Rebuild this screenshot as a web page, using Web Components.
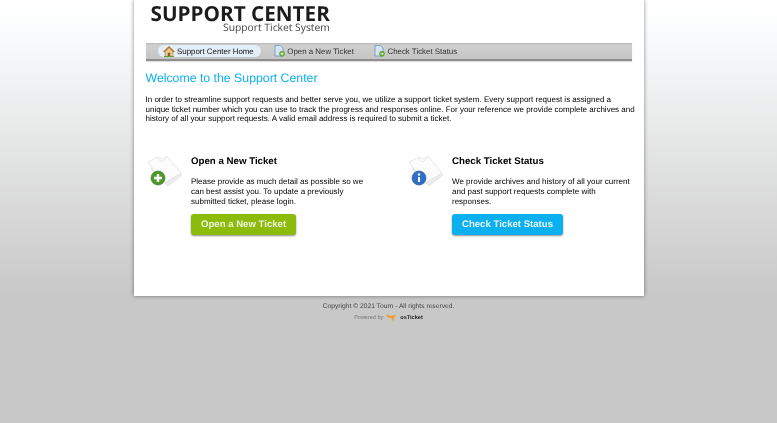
<!DOCTYPE html>
<html>
<head>
<meta charset="utf-8">
<title>Support Center</title>
<style>
html, body { margin: 0; height: 100%; }
body {
  background: #c8c8c8 linear-gradient(#ffffff 0, #fbfcfd 30px, #c8c8c8 296px) no-repeat;
  font-family: "Liberation Sans", Arial, sans-serif;
  color: #000;
  text-rendering: geometricPrecision;
}
</style>
</head>
<body>
<support-page>
  <support-header slot="header"></support-header>
  <support-nav slot="nav">
    <support-nav-item icon="home" active>Support Center Home</support-nav-item>
    <support-nav-item icon="new">Open a New Ticket</support-nav-item>
    <support-nav-item icon="status">Check Ticket Status</support-nav-item>
  </support-nav>
  <support-welcome>
    In order to streamline support requests and better serve you, we utilize a support ticket system. Every support request is assigned a unique ticket number which you can use to track the progress and responses online. For your reference we provide complete archives and history of all your support requests. A valid email address is required to submit a ticket.
  </support-welcome>
  <support-actions>
    <support-action kind="new" title="Open a New Ticket" button="Open a New Ticket">
      Please provide as much detail as possible so we can best assist you. To update a previously submitted ticket, please login.
    </support-action>
    <support-action kind="status" title="Check Ticket Status" button="Check Ticket Status">
      We provide archives and history of all your current and past support requests complete with responses.
    </support-action>
  </support-actions>
  <support-footer slot="footer"></support-footer>
</support-page>

<script>
function makeTemplate (html) {
  const t = document.createElement('template');
  t.innerHTML = html;
  return t;
}

class SupportPage extends HTMLElement {
  constructor() {
    super();
    this.attachShadow({ mode: 'open' });
    this.shadowRoot.append(SupportPage.TEMPLATE.content.cloneNode(true));
  }
}
SupportPage.TEMPLATE = makeTemplate(`
<style>
:host { display: block; width: 510px; margin: 0 auto; filter: blur(.3px); }
.sheet {
  background: #fff;
  height: 296px;
  box-sizing: border-box;
  padding: 0 12px;
  box-shadow: 0 0 4px rgba(0,0,0,.45);
  display: flow-root;
}
</style>
<div class="sheet">
  <slot name="header"></slot>
  <slot name="nav"></slot>
  <slot></slot>
</div>
<slot name="footer"></slot>
`);

class SupportHeader extends HTMLElement {
  constructor() {
    super();
    this.attachShadow({ mode: 'open' });
    this.shadowRoot.append(SupportHeader.TEMPLATE.content.cloneNode(true));
  }
}
SupportHeader.TEMPLATE = makeTemplate(`
<style>
:host { display: block; height: 43px; box-sizing: border-box; padding: 3.500px 0 0 5px; font-family: "Open Sans", sans-serif; color: #1c1c1c; }
.logo { display: inline-flex; flex-direction: column; align-items: flex-end; }
.name { font-size: 20.700px; font-weight: 700; line-height: 18px; }
.tag { font-size: 10.300px; line-height: 9px; margin-top: 1.500px; color: #444; }
</style>
<div class="logo">
  <div class="name">SUPPORT CENTER</div>
  <div class="tag">Support Ticket System</div>
</div>
`);

class SupportNav extends HTMLElement {
  constructor() {
    super();
    this.attachShadow({ mode: 'open' });
    this.shadowRoot.innerHTML = `
<style>
:host {
  display: flex;
  align-items: center;
  gap: 8px;
  height: 17.500px;
  box-sizing: border-box;
  padding: 1px 0 0 12px;
  background: linear-gradient(#b9b9b9, #d0d0d0 15%, #c6c6c6 85%);
  border-bottom: 2px solid #8e8e8e;
  box-shadow: 0 1px 1px rgba(0,0,0,.12);
}
</style>
<slot></slot>`;
  }
}

const NAV_ICONS = {
  home: `<svg width="12" height="11" viewBox="0 0 12 11"><path d="M6 .5 .5 5.500h1.600V10.500h7.800V5.500h1.600z" fill="#e3c98a" stroke="#9a8a4a" stroke-width=".6"/><path d="M4.800 10.500V6.800h2.400v3.700z" fill="#8a5a2a"/><path d="M1 6 6 1l5 5" fill="none" stroke="#b5712b" stroke-width="1.200"/><path d="M1 10.500h10" stroke="#5d9e3a" stroke-width="1"/></svg>`,
  new: `<svg width="11" height="12" viewBox="0 0 11 12"><path d="M1 .5h5.500L9 3v8H1z" fill="#d5e4f4" stroke="#6d93bd" stroke-width=".8"/><circle cx="8" cy="8.800" r="2.800" fill="#5fa52f"/><path d="M6.500 8.800h3M8 7.300v3" stroke="#fff" stroke-width=".9"/></svg>`,
  status: `<svg width="11" height="12" viewBox="0 0 11 12"><path d="M1 .5h5.500L9 3v8H1z" fill="#d5e4f4" stroke="#6d93bd" stroke-width=".8"/><circle cx="8" cy="8.800" r="2.800" fill="#5fa52f"/><path d="M6.300 8.800h2.600M8 7.500l1.300 1.300L8 10.100" fill="none" stroke="#fff" stroke-width=".8"/></svg>`
};

class SupportNavItem extends HTMLElement {
  constructor() {
    super();
    this.attachShadow({ mode: 'open' });
    this.shadowRoot.innerHTML = `
<style>
:host {
  display: inline-flex;
  align-items: center;
  gap: 2.500px;
  height: 12px;
  padding: 0 7px 0 5px;
  border-radius: 6px;
  font-size: 7.900px;
  color: #333;
  white-space: nowrap;
}
:host([active]) { background: #e3eef6; color: #111; }
</style>
${NAV_ICONS[this.getAttribute('icon')]}
<slot></slot>`;
  }
}

class SupportWelcome extends HTMLElement {
  constructor() {
    super();
    this.attachShadow({ mode: 'open' });
    this.shadowRoot.innerHTML = `
<style>
:host { display: block; padding-top: 9.500px; }
h1 { margin: 0 0 9px; font-size: 12.300px; line-height: 16px; font-weight: 400; color: #0cb0ee; }
p { margin: 0 -5px 0 0; font-size: 8px; line-height: 9.700px; color: #000; }
</style>
<h1>Welcome to the Support Center</h1>
<p><slot></slot></p>`;
  }
}

class SupportActions extends HTMLElement {
  constructor() {
    super();
    this.attachShadow({ mode: 'open' });
    this.shadowRoot.innerHTML = `
<style>
:host { display: grid; grid-template-columns: 261px 1fr; margin-top: 30px; }
</style>
<slot></slot>`;
  }
}

const BADGES = {
  new: `<circle cx="10" cy="24" r="7" fill="#4d9a2a" stroke="#2f6e18" stroke-width=".6"/><path d="M6 24h8M10 20v8" stroke="#fff" stroke-width="2.400"/>`,
  status: `<circle cx="10" cy="24" r="7" fill="#2f6fc6" stroke="#1f4f96" stroke-width=".6"/><circle cx="10" cy="20.500" r="1.200" fill="#fff"/><path d="M10 23v5" stroke="#fff" stroke-width="2"/>`
};

class SupportAction extends HTMLElement {
  constructor() {
    super();
    const kind = this.getAttribute('kind');
    this.attachShadow({ mode: 'open' });
    this.shadowRoot.innerHTML = `
<style>
:host { display: grid; grid-template-columns: 45.500px 1fr; font-size: 8px; line-height: 9.700px; color: #000; }
svg { margin: 0 0 0 2px; }
h2 { margin: 0 0 9px; padding-top: 1px; font-size: 9.700px; line-height: 13px; color: #000; }
p { margin: 0 0 8px; width: 180px; }
a {
  display: inline-block;
  padding: 0 10px;
  height: 21px;
  line-height: 21px;
  border-radius: 3px;
  font-size: 9.600px;
  font-weight: 700;
  color: #e9f5d8;
  box-shadow: 0 1px 2px rgba(0,0,0,.45);
}
a.new { background: #8dbb0b; }
a.status { background: #0cb0ee; color: #e4f7ff; }
</style>
<svg width="36" height="36" viewBox="0 0 36 36">
  <path d="M3 15 20 32 34 21 22 7z" fill="#ececec" stroke="#dadada" stroke-width=".6"/>
  <path d="M0 8 10 3l5 2 4-3 14 17-18 11z" fill="#fcfcfc" stroke="#dedede" stroke-width=".7"/>
  <path d="M9 4l5 4 5-5" fill="none" stroke="#e6e6e6"/>
  ${BADGES[kind]}
</svg>
<div>
  <h2>${this.getAttribute('title')}</h2>
  <p><slot></slot></p>
  <a class="${kind}">${this.getAttribute('button')}</a>
</div>`;
  }
}

class SupportFooter extends HTMLElement {
  constructor() {
    super();
    this.attachShadow({ mode: 'open' });
    this.shadowRoot.innerHTML = `
<style>
:host { display: block; text-align: center; padding-top: 6px; color: #444; font-size: 6.700px; line-height: 9px; }
.powered { display: flex; justify-content: center; align-items: center; gap: 3px; margin-top: 2px; height: 10px; font-size: 5.500px; color: #777; }
b { color: #222; font-size: 5.600px; }
</style>
<div>Copyright &copy; 2021 Tourn - All rights reserved.</div>
<div class="powered">
  <span>Powered by</span>
  <svg width="11" height="8" viewBox="0 0 11 8"><path d="M0 .5 5 2 10.500 .5 8 3.500 7.500 7.500 5.500 4 2 3.500z" fill="#f39a1f"/></svg>
  <b>osTicket</b>
</div>`;
  }
}

customElements.define('support-page', SupportPage);
customElements.define('support-header', SupportHeader);
customElements.define('support-nav', SupportNav);
customElements.define('support-nav-item', SupportNavItem);
customElements.define('support-welcome', SupportWelcome);
customElements.define('support-actions', SupportActions);
customElements.define('support-action', SupportAction);
customElements.define('support-footer', SupportFooter);
</script>
</body>
</html>
